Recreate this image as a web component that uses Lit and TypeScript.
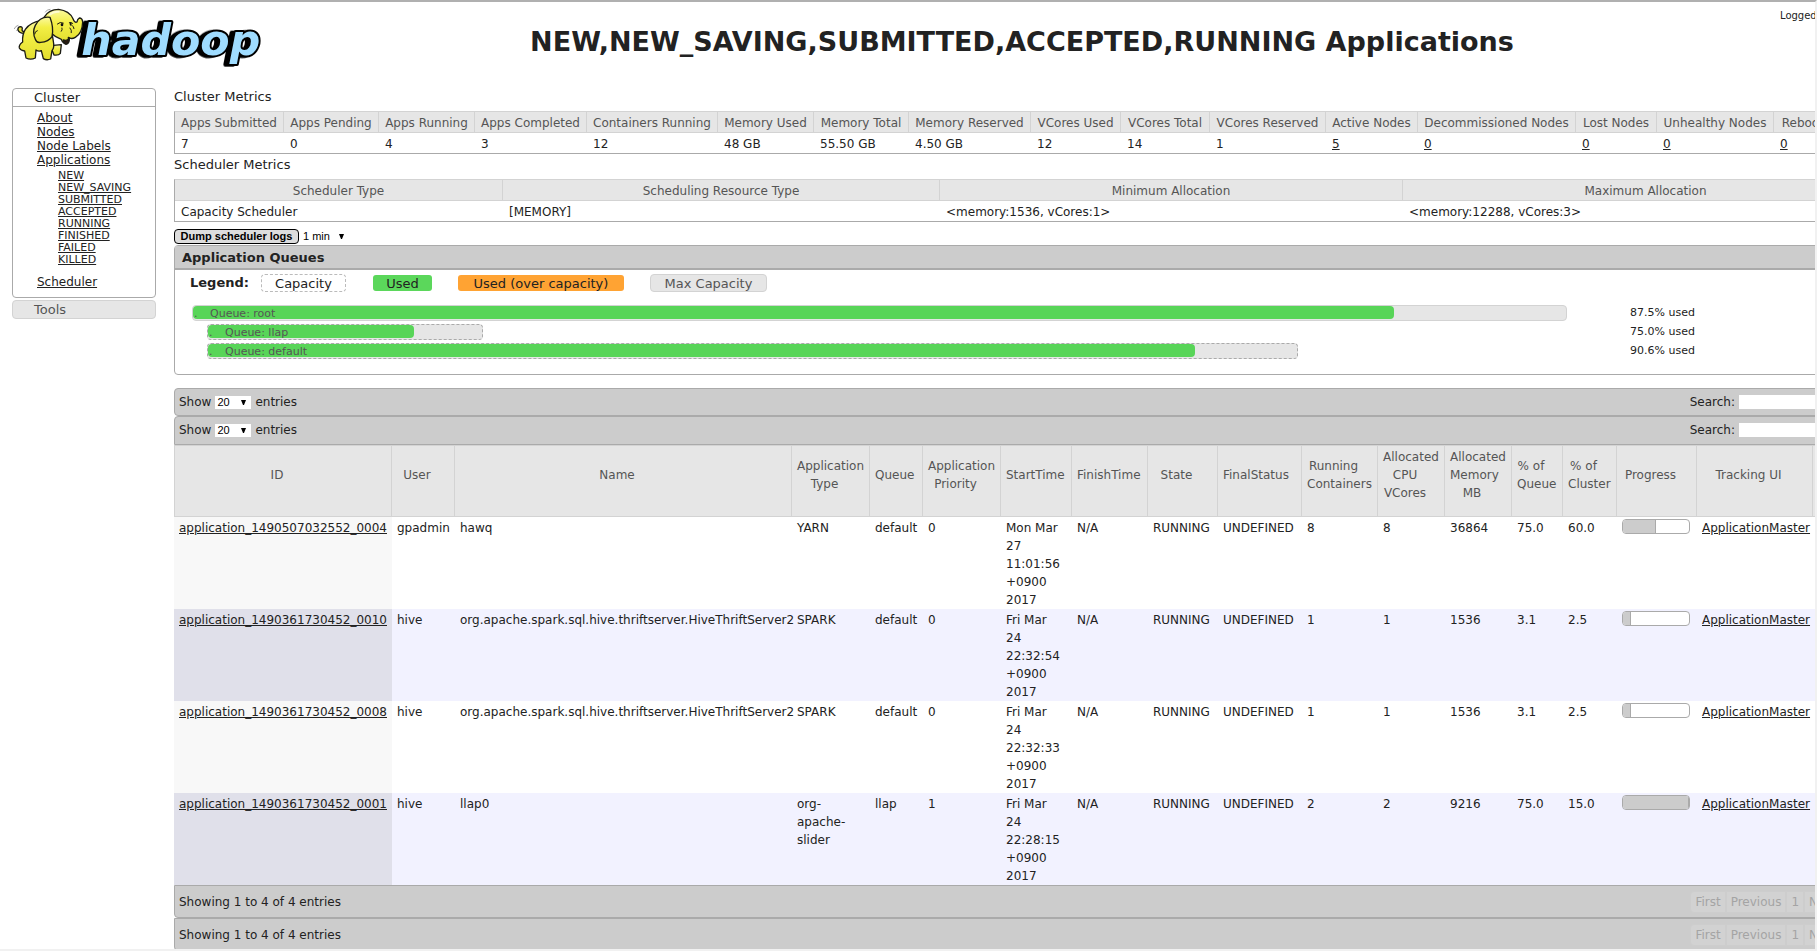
import { LitElement, html, css, svg } from "lit";
import { customElement } from "lit/decorators.js";

const METRICS: { label: string; value: string; width: number; link?: boolean }[] = [
  { label: "Apps Submitted", value: "7", width: 109 },
  { label: "Apps Pending", value: "0", width: 95 },
  { label: "Apps Running", value: "4", width: 96 },
  { label: "Apps Completed", value: "3", width: 112 },
  { label: "Containers Running", value: "12", width: 131 },
  { label: "Memory Used", value: "48 GB", width: 96 },
  { label: "Memory Total", value: "55.50 GB", width: 95 },
  { label: "Memory Reserved", value: "4.50 GB", width: 122 },
  { label: "VCores Used", value: "12", width: 90 },
  { label: "VCores Total", value: "14", width: 89 },
  { label: "VCores Reserved", value: "1", width: 116 },
  { label: "Active Nodes", value: "5", width: 92, link: true },
  { label: "Decommissioned Nodes", value: "0", width: 158, link: true },
  { label: "Lost Nodes", value: "0", width: 81, link: true },
  { label: "Unhealthy Nodes", value: "0", width: 117, link: true },
  { label: "Rebooted Nodes", value: "0", width: 115, link: true },
];

const SCHEDULER = [
  { label: "Scheduler Type", value: "Capacity Scheduler", width: 328 },
  { label: "Scheduling Resource Type", value: "[MEMORY]", width: 437 },
  { label: "Minimum Allocation", value: "<memory:1536, vCores:1>", width: 463 },
  { label: "Maximum Allocation", value: "<memory:12288, vCores:3>", width: 486 },
];

const QUEUES = [
  { name: "root", width: 95.6, used: 87.5, level: 0 },
  { name: "llap", width: 19.2, used: 75.0, level: 1 },
  { name: "default", width: 75.9, used: 90.6, level: 1 },
];

const COLUMNS: [string, number][] = [
  ["ID", 218],
  ["User", 63],
  ["Name", 337],
  ["Application Type", 78],
  ["Queue", 53],
  ["Application Priority", 78],
  ["StartTime", 71],
  ["FinishTime", 76],
  ["State", 70],
  ["FinalStatus", 84],
  ["Running Containers", 76],
  ["Allocated CPU VCores", 67],
  ["Allocated Memory MB", 67],
  ["% of Queue", 51],
  ["% of Cluster", 54],
  ["Progress", 80],
  ["Tracking UI", 116],
  ["Blacklisted Nodes", 75],
];

const THRIFT = "org.apache.spark.sql.hive.thriftserver.HiveThriftServer2";

const APPS = [
  { id: "application_1490507032552_0004", cells: ["gpadmin", "hawq", "YARN", "default", "0", "Mon Mar 27 11:01:56 +0900 2017", "N/A", "RUNNING", "UNDEFINED", "8", "8", "36864", "75.0", "60.0"], progress: 50 },
  { id: "application_1490361730452_0010", cells: ["hive", THRIFT, "SPARK", "default", "0", "Fri Mar 24 22:32:54 +0900 2017", "N/A", "RUNNING", "UNDEFINED", "1", "1", "1536", "3.1", "2.5"], progress: 12 },
  { id: "application_1490361730452_0008", cells: ["hive", THRIFT, "SPARK", "default", "0", "Fri Mar 24 22:32:33 +0900 2017", "N/A", "RUNNING", "UNDEFINED", "1", "1", "1536", "3.1", "2.5"], progress: 12 },
  { id: "application_1490361730452_0001", cells: ["hive", "llap0", "org-apache-slider", "llap", "1", "Fri Mar 24 22:28:15 +0900 2017", "N/A", "RUNNING", "UNDEFINED", "2", "2", "9216", "75.0", "15.0"], progress: 100 },
];

const STATES = ["NEW", "NEW_SAVING", "SUBMITTED", "ACCEPTED", "RUNNING", "FINISHED", "FAILED", "KILLED"];

const elephant = svg`
  <g stroke="#1c1c14" stroke-width="4" stroke-linejoin="round" stroke-linecap="round">
    <path fill="none" stroke-width="2" stroke="#777" d="M136 36Q140 28 150 28M43 86Q46 78 54 76M50 92Q52 86 57 83"/>
    <path fill="#e6e23a" d="M72 100Q58 100 54 90Q53 80 62 80Q69 82 66 90M66 90Q66 95 76 96"/>
    <path fill="url(#hide)" d="M160 136L184 134L181 160Q176 167 162 165L156 150Z"/>
    <path fill="url(#hide)" d="M124 62Q92 66 76 88Q66 104 68 126Q56 134 58 144Q62 152 74 153L78 174Q92 181 106 174L108 150Q116 156 124 152L130 176Q140 182 152 177L156 152Q164 142 160 124L150 60Z"/>
    <path fill="url(#hide)" d="M132 52Q146 28 176 28Q208 32 219 56Q224 70 231 66Q232 58 238 54Q247 54 248 66Q247 100 226 112Q214 119 205 112Q208 126 196 130Q188 130 184 118Q166 112 154 100Z"/>
    <path fill="#2a1a10" d="M190 120Q202 124 208 114Q209 130 198 133Q190 130 190 120Z"/>
    <path fill="url(#hide)" d="M150 52Q120 48 106 76Q96 96 106 118Q110 130 122 127Q146 126 156 110Q162 84 150 52Z"/>
    <path fill="none" stroke-width="3" d="M172 72Q180 64 190 69M208 68Q214 66 218 70M216 76Q222 80 222 86M210 84Q216 90 214 98M186 84Q188 90 184 94M112 92Q104 94 104 102"/>
    <ellipse cx="186" cy="74" rx="4" ry="5" fill="#111" stroke="none"/>
    <ellipse cx="212" cy="72" rx="3" ry="5" fill="#111" stroke="none"/>
    <path fill="none" stroke="#ffffff" stroke-width="6" opacity=".6" d="M150 44Q160 34 176 35"/>
  </g>`;

@customElement("app-root")
export class AppRoot extends LitElement {
  static styles = css`
    :host {
      display: block;
      box-sizing: border-box;
      height: 100vh;
      overflow: hidden;
      border: 0 solid #f1f1f1;
      border-width: 2px 2px 2px 0;
      border-top-color: #b0b0b0;
      background: #fff;
      color: #222;
      font: 12px/18px "DejaVu Sans", Verdana, sans-serif;
    }
    * { box-sizing: border-box; }
    a { color: inherit; text-decoration: underline; }
    .page { min-width: 1900px; }
    .top { display: flex; height: 84px; }
    .logo { flex: none; width: 264px; height: 75px; }
    .wordmark { font: italic bold 128px "DejaVu Sans", sans-serif; fill: #9fdcff; stroke: #000; stroke-width: 12px; stroke-linejoin: round; paint-order: stroke; filter: drop-shadow(-12px 2px 0 #000); }
    .title { flex: 1; margin: 0; padding-top: 24px; text-align: center; font-size: 27px; line-height: 32px; }
    .user { width: 120px; padding-top: 5px; font-size: 10px; white-space: nowrap; }
    .body { display: flex; gap: 18px; padding: 0 12px; }
    .side { flex: none; width: 144px; padding-top: 2px; }
    .content { flex: 1; min-width: 0; }

    .menu { border: 1px solid #aaa; border-radius: 4px; padding-bottom: 8px; }
    .menu-head { margin: 0; padding-left: 21px; font-size: 13px; line-height: 17px; font-weight: normal; border-bottom: 1px solid #aaa; }
    .links, .states { list-style: none; margin: 0; line-height: 14px; }
    .links { padding: 4px 0 0 24px; }
    .states { padding: 3px 0 9px 21px; font-size: 11px; line-height: 12px; }
    .tools { display: block; width: 100%; height: 19px; margin-top: 2px; padding: 0 0 0 21px; text-align: left; font: 13px/17px "DejaVu Sans", Verdana, sans-serif; color: #555; background: #e6e6e6; border: 1px solid #d3d3d3; border-radius: 4px; }

    .section { margin: 0; padding: 2px 0 5px; font-size: 13px; line-height: 18px; font-weight: normal; }
    table { border-collapse: separate; border-spacing: 0; table-layout: fixed; width: 100%; }
    th { font-weight: normal; color: #555; background: #e6e6e6; text-align: center; }
    .info { border: 1px solid #aaa; border-top-color: #d3d3d3; }
    .info th { height: 21px; padding: 2px 0 0; line-height: 18px; white-space: nowrap; border-right: 1px solid #d3d3d3; border-bottom: 1px solid #d3d3d3; }
    .info td { height: 20px; padding: 2px 6px 0; white-space: nowrap; }

    .actions { display: flex; align-items: center; gap: 2px; padding: 7px 0 1px; }
    .dump { height: 15px; width: 125px; padding: 0; font: bold 11px/13px "Liberation Sans", Arial, sans-serif; color: #000; background: #ddd; border: 1px solid #000; border-radius: 4px; }
    .pick { position: relative; display: inline-flex; }
    .pick select { appearance: none; margin: 0; border: 0; border-radius: 0; background: #fff; color: #000; padding: 0 0 0 2px; height: 13px; width: 36px; font: 11px/13px "Liberation Sans", Arial, sans-serif; }
    .pick.wide select { width: 48px; }
    .pick svg { position: absolute; right: 5px; top: 4px; width: 5px; height: 5px; pointer-events: none; }

    .queues { border: 1px solid #aaa; border-radius: 4px; height: 130px; }
    .queues-head { margin: 0; height: 24px; padding-left: 7px; font-size: 13px; line-height: 24px; background: #ccc; border-bottom: 2px solid #aaa; }
    .legend { display: flex; align-items: center; height: 26px; padding-left: 15px; font-size: 13px; }
    .legend strong { margin-right: 12px; }
    .chip { height: 18px; line-height: 17px; text-align: center; border: 1px solid transparent; border-radius: 4px; }
    .chip.capacity { width: 85px; margin-right: 26px; border: 1px dashed #bbb; }
    .chip.used { width: 61px; margin-right: 24px; background: #5bd75b; background-clip: padding-box; }
    .chip.over { width: 168px; margin-right: 25px; background: #ffa333; background-clip: padding-box; }
    .chip.max { width: 117px; color: #555; background: #e6e6e6; border-color: #d3d3d3; }
    .bars { padding: 9px 0 0 17px; font-size: 11px; }
    .queue { display: grid; grid-template-columns: 1fr 257px; height: 19px; line-height: 15px; }
    .nested .bar { margin-left: 15px; border: 1px dashed #aaa; }
    .bar { height: 16px; background: #e6e6e6; border: 1px solid #d3d3d3; border-radius: 4px; }
    .fill { height: 13px; line-height: 15px; padding-left: 1px; background: #58d558; border-radius: 4px; white-space: nowrap; color: #555; }
    .dot { display: inline-block; width: 16px; }

    .strip { display: flex; align-items: center; justify-content: space-between; padding: 0 5px 0 4px; background: #ccc; border: 1px solid #aaa; border-radius: 4px; }
    .filter { height: 28px; }
    .filter + .filter { height: 29px; border-radius: 4px 4px 0 0; padding-bottom: 1px; }
    .filters { padding-top: 13px; }
    .group { display: flex; align-items: center; gap: 4px; }
    .search { width: 143px; height: 14px; padding: 0 2px; border: 0; background: #fff; font: 11px "Liberation Sans", Arial, sans-serif; }

    .apps th { height: 72px; padding: 0 17px 12px 5px; border-right: 1px solid #d3d3d3; border-bottom: 1px solid #d3d3d3; border-top: 1px solid #d3d3d3; }
    .apps th:first-child { border-left: 1px solid #d3d3d3; }
    .apps td { height: 92px; padding: 2px 10px 0 5px; vertical-align: top; }
    .apps td:first-child { background: #f8f8f8; }
    .apps tr:nth-child(even) td { background: #f2f2ff; }
    .apps tr:nth-child(even) td:first-child { background: #e0e0ea; }
    .progress { width: 68px; height: 15px; background: #fff; border: 1px solid #aaa; border-radius: 4px; overflow: hidden; }
    .done { height: 100%; background: #ccc; border-right: 1px solid #aaa; }
    .foot { height: 33px; padding-right: 10px; border-radius: 0 0 4px 4px; }
    .pages { display: flex; }
    .pages button { height: 22px; padding: 0 4px; font: 12px/18px "DejaVu Sans", Verdana, sans-serif; color: #a4a4a4; background: #d2d2d2; border: 1px solid #cdcdcd; }
    .pages button:first-child { border-radius: 4px 0 0 4px; }
    .pages button:last-child { border-radius: 0 4px 4px 0; }
  `;

  private pick(id: string, label: string, value: string, wide = false) {
    return html`<span class="pick ${wide ? "wide" : ""}">
      <select id=${id} aria-label=${label}><option>${value}</option></select>
      <svg viewBox="0 0 5 5" aria-hidden="true"><path d="M0 0H5L3 5H2Z" fill="#000" /></svg>
    </span>`;
  }

  private info(items: { label: string; value: string; width: number; link?: boolean }[]) {
    return html`<table class="info">
      <colgroup>${items.map((m) => html`<col width=${m.width} />`)}</colgroup>
      <thead><tr>${items.map((m) => html`<th scope="col">${m.label}</th>`)}</tr></thead>
      <tbody><tr>${items.map((m) => html`<td>${m.link ? html`<a href="#">${m.value}</a>` : m.value}</td>`)}</tr></tbody>
    </table>`;
  }

  private filter(n: number) {
    return html`<div class="strip filter">
      <div class="group"><label for="len${n}">Show</label>${this.pick(`len${n}`, "Show entries", "20")}<span>entries</span></div>
      <div class="group"><label for="search${n}">Search:</label><input class="search" id="search${n}" type="text" /></div>
    </div>`;
  }

  private footer() {
    return html`<div class="strip foot">
      <span>Showing 1 to 4 of 4 entries</span>
      <div class="pages">${["First", "Previous", "1", "Next", "Last"].map((p) => html`<button type="button">${p}</button>`)}</div>
    </div>`;
  }

  render() {
    return html`<div class="page">
      <header class="top">
        <svg class="logo" viewBox="0 6 792 225" role="img" aria-label="hadoop">
          <defs>
            <linearGradient id="hide" x1="0" y1="0" x2="0" y2="1">
              <stop offset="0" stop-color="#fbf9a0" /><stop offset=".4" stop-color="#f3ef45" /><stop offset="1" stop-color="#e3de2e" />
            </linearGradient>
          </defs>
          <text class="wordmark" x="244" y="166">hadoop</text>
          ${elephant}
        </svg>
        <h1 class="title">NEW,NEW_SAVING,SUBMITTED,ACCEPTED,RUNNING Applications</h1>
        <div class="user">Logged in as: dr.who</div>
      </header>
      <div class="body">
        <nav class="side">
          <div class="menu">
            <h3 class="menu-head">Cluster</h3>
            <ul class="links">
              <li><a href="#">About</a></li>
              <li><a href="#">Nodes</a></li>
              <li><a href="#">Node Labels</a></li>
              <li><a href="#">Applications</a>
                <ul class="states">${STATES.map((s) => html`<li><a href="#">${s}</a></li>`)}</ul>
              </li>
              <li><a href="#">Scheduler</a></li>
            </ul>
          </div>
          <button class="tools" type="button">Tools</button>
        </nav>
        <main class="content">
          <h2 class="section">Cluster Metrics</h2>
          ${this.info(METRICS)}
          <h2 class="section">Scheduler Metrics</h2>
          ${this.info(SCHEDULER)}
          <div class="actions">
            <button class="dump" type="button">Dump scheduler logs</button>
            ${this.pick("period", "Log period", "1 min", true)}
          </div>
          <section class="queues">
            <h3 class="queues-head">Application Queues</h3>
            <div class="legend">
              <strong>Legend:</strong>
              <span class="chip capacity">Capacity</span>
              <span class="chip used">Used</span>
              <span class="chip over">Used (over capacity)</span>
              <span class="chip max">Max Capacity</span>
            </div>
            <div class="bars">
              ${QUEUES.map((q) => html`<div class="queue ${q.level ? "nested" : ""}">
                <div class="bar" style="width:${q.width}%">
                  <div class="fill" style="width:${q.used}%"><span class="dot">.</span>Queue: ${q.name}</div>
                </div>
                <span>${q.used.toFixed(1)}% used</span>
              </div>`)}
            </div>
          </section>
          <div class="filters">${this.filter(1)}${this.filter(2)}</div>
          <table class="apps">
            <colgroup>${COLUMNS.map(([, w]) => html`<col width=${w} />`)}</colgroup>
            <thead><tr>${COLUMNS.map(([label]) => html`<th scope="col">${label}</th>`)}</tr></thead>
            <tbody>
              ${APPS.map((a) => html`<tr>
                <td><a href="#">${a.id}</a></td>
                ${a.cells.map((c) => html`<td>${c}</td>`)}
                <td><div class="progress"><div class="done" style="width:${a.progress}%"></div></div></td>
                <td><a href="#">ApplicationMaster</a></td>
                <td>0</td>
              </tr>`)}
            </tbody>
          </table>
          ${this.footer()}${this.footer()}
        </main>
      </div>
    </div>`;
  }
}
